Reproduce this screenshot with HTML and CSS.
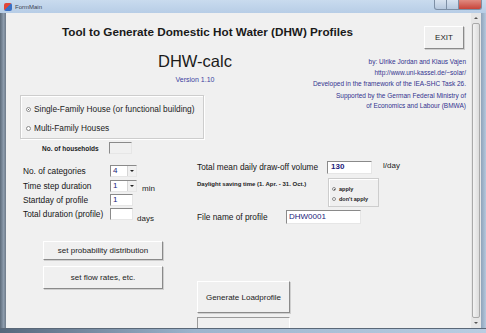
FILE: index.html
```html
<!DOCTYPE html>
<html lang="en">
<head>
    <meta charset="UTF-8">
    <title>FormMain</title>
    <link rel="stylesheet" href="styles.css">
</head>
<body>
<div class="window">
    <div class="titlebar">
        <span class="app-icon"></span>
        <span class="title-text">FormMain</span>
        <div class="caption-btns">
            <span class="cap cap-min"></span>
            <span class="cap cap-max"></span>
            <span class="cap cap-close"></span>
        </div>
    </div>
    <div class="frame">
        <div class="border-left"></div>
        <div class="client">
            <div class="head">
                <h1 class="main-title">Tool to Generate Domestic Hot Water (DHW) Profiles</h1>
                <button class="btn btn-exit">EXIT</button>
            </div>
            <div class="subhead">
                <div class="brand">
                    <div class="brand-name">DHW-calc</div>
                    <div class="version">Version 1.10</div>
                </div>
                <div class="credits">
                    <p>by: Ulrike Jordan and Klaus Vajen</p>
                    <p>http://www.uni-kassel.de/~solar/</p>
                    <p>Developed in the framework of the IEA-SHC Task 26.</p>
                    <p class="gap">Supported by the German Federal Ministry of</p>
                    <p>of Economics and Labour (BMWA)</p>
                </div>
            </div>

            <div class="groupbox">
                <label class="radio-row"><span class="radio checked"></span>Single-Family House (or functional building)</label>
                <label class="radio-row"><span class="radio"></span>Multi-Family Houses</label>
            </div>
            <div class="households">
                <span class="small-bold">No. of households</span>
                <span class="textbox tb-house"></span>
            </div>

            <div class="form-grid">
                <div class="col-left">
                    <div class="row">
                        <span class="lbl">No. of categories</span>
                        <span class="combo"><span class="combo-val">4</span><span class="combo-arrow"></span></span>
                    </div>
                    <div class="row">
                        <span class="lbl">Time step duration</span>
                        <span class="combo"><span class="combo-val">1</span><span class="combo-arrow"></span></span>
                        <span class="unit unit-min">min</span>
                    </div>
                    <div class="row">
                        <span class="lbl">Startday of profile</span>
                        <span class="textbox tb-short">1</span>
                    </div>
                    <div class="row">
                        <span class="lbl">Total duration (profile)</span>
                        <span class="textbox tb-short"></span>
                        <span class="unit unit-days">days</span>
                    </div>
                    <button class="btn btn-wide btn-prob">set probability distribution</button>
                    <button class="btn btn-wide btn-flow">set flow rates, etc.</button>
                </div>
                <div class="col-right">
                    <div class="row">
                        <span class="lbl lbl-volume">Total mean daily draw-off volume</span>
                        <span class="textbox tb-volume">130</span>
                        <span class="unit unit-day">l/day</span>
                    </div>
                    <div class="row row-dst">
                        <span class="small-bold lbl-dst">Daylight saving time (1. Apr. - 31. Oct.)</span>
                        <div class="dst-box">
                            <label class="mini-radio"><span class="radio sm checked"></span>apply</label>
                            <label class="mini-radio"><span class="radio sm"></span>don't apply</label>
                        </div>
                    </div>
                    <div class="row">
                        <span class="lbl lbl-file">File name of profile</span>
                        <span class="textbox tb-file">DHW0001</span>
                    </div>
                    <button class="btn btn-generate">Generate Loadprofile</button>
                    <div class="progress"></div>
                </div>
            </div>
        </div>
        <div class="scrollbar">
            <span class="sb-arrow sb-up"></span>
            <span class="sb-thumb"></span>
            <span class="sb-arrow sb-down"></span>
        </div>
        <div class="border-right"></div>
    </div>
    <div class="border-bottom"></div>
</div>
</body>
</html>
```

FILE: styles.css
```css
*{
    margin: 0;
    padding: 0;
    box-sizing: border-box;
}
body{
    width: 486px;
    height: 333px;
    overflow: hidden;
    background: #ffffff;
    font-family: "Liberation Sans", Arial, sans-serif;
    color: #1c1c1c;
}
.window{
    width: 486px;
    height: 333px;
    display: flex;
    flex-direction: column;
}

/* title bar */
.titlebar{
    height: 13px;
    display: flex;
    align-items: center;
    padding-left: 4px;
    background: linear-gradient(to bottom, #c9dbee, #b7cde6);
}
.app-icon{
    width: 8px;
    height: 8px;
    border-radius: 2px;
    background: linear-gradient(135deg, #e0463a 0 45%, #3a6fc4 45% 100%);
}
.title-text{
    margin-left: 3px;
    font-size: 6px;
    color: #3a4250;
}
.caption-btns{
    margin-left: auto;
    margin-right: 4px;
    display: flex;
    align-self: flex-start;
}
.cap{
    height: 10px;
    border: 1px solid #7d8fa5;
    border-top: none;
    background: linear-gradient(to bottom, #d8e3f0, #b6c8de);
}
.cap-min{
    width: 13px;
    border-radius: 0 0 0 3px;
}
.cap-max{
    width: 12px;
    border-left: none;
}
.cap-close{
    width: 23px;
    border-left: none;
    border-radius: 0 0 3px 0;
    background: linear-gradient(to bottom, #e08a80, #c7443a);
}

/* frame */
.frame{
    flex: 1;
    display: flex;
    min-height: 0;
}
.border-left{
    width: 6px;
    background: linear-gradient(to right, #5d6b7a, #8d9cad 60%, #6e7a88);
}
.border-right{
    width: 5px;
    background: linear-gradient(to right, #8fa3ba, #b5c8dd);
}
.border-bottom{
    height: 5px;
    background: linear-gradient(to right, #55677c, #9db4cd 40%, #b9cde2);
    border-top: 1px solid #5a6878;
}
.scrollbar{
    width: 10px;
    background: #e6e6e6;
    display: flex;
    flex-direction: column;
    align-items: center;
    padding: 2px 0;
}
.sb-arrow{
    width: 0;
    height: 0;
    border-left: 2px solid transparent;
    border-right: 2px solid transparent;
    margin: 2px 0;
}
.sb-up{
    border-bottom: 2px solid #555;
}
.sb-down{
    border-top: 2px solid #555;
}
.sb-thumb{
    flex: 1;
    width: 8px;
    margin: 2px 0;
    border: 1px solid #a9a9a9;
    border-radius: 2px;
    background: linear-gradient(to right, #f3f3f3, #dcdcdc);
}

/* client */
.client{
    flex: 1;
    background: #f0f0f0;
    overflow: hidden;
    padding-top: 12px;
}
.head{
    display: flex;
    align-items: flex-start;
    padding-left: 56px;
    padding-right: 7px;
}
.main-title{
    font-size: 11.7px;
    line-height: 14px;
    font-weight: bold;
    color: #1a1a1a;
}
.btn{
    font-family: "Liberation Sans", Arial, sans-serif;
    font-size: 8px;
    color: #1c1c1c;
    background: #f0f0f0;
    border: 1px solid;
    border-color: #ffffff #8a8a8a #8a8a8a #ffffff;
    box-shadow: 1px 1px 0 #cfcfcf;
}
.btn-exit{
    margin-left: auto;
    margin-top: 1px;
    width: 40px;
    height: 23px;
    font-size: 8px;
}

.subhead{
    display: flex;
    height: 46px;
    padding-right: 5px;
}
.brand{
    flex: 0 0 256px;
    text-align: center;
    padding-left: 122px;
    margin-top: 3px;
}
.brand-name{
    font-size: 16.5px;
    line-height: 18px;
    color: #1a1a1a;
}
.version{
    font-size: 7px;
    line-height: 9px;
    margin-top: 5px;
    color: #3a3ea0;
}
.credits{
    margin-left: auto;
    text-align: right;
    color: #33338f;
    font-size: 6.5px;
    line-height: 11px;
    margin-top: 7px;
    white-space: nowrap;
}
.credits .gap{
    margin-top: 2px;
    line-height: 9px;
}

/* family group */
.groupbox{
    margin-left: 14px;
    width: 184px;
    height: 44px;
    border: 1px solid #cdcdcd;
    box-shadow: inset 1px 1px 0 #fff, 1px 1px 0 #fff;
    padding: 8px 0 0 5px;
    display: flex;
    flex-direction: column;
    gap: 8px;
}
.radio-row{
    display: flex;
    align-items: center;
    font-size: 8.3px;
    line-height: 11px;
}
.radio{
    width: 5px;
    height: 5px;
    border-radius: 50%;
    border: 1px solid #8c8c8c;
    background: #fff;
    margin-right: 3px;
    display: inline-flex;
    align-items: center;
    justify-content: center;
}
.radio.checked::after{
    content: "";
    width: 1px;
    height: 1px;
    border-radius: 50%;
    background: #333;
}
.households{
    display: flex;
    align-items: center;
    margin-top: 3px;
    padding-left: 36px;
}
.small-bold{
    font-size: 6.5px;
    font-weight: bold;
    color: #222;
}
.textbox{
    display: inline-block;
    background: #fff;
    border: 1px solid;
    border-color: #8a8a8a #e6e6e6 #e6e6e6 #8a8a8a;
    font-size: 8px;
    line-height: 10px;
    color: #1b1b7a;
    padding-left: 2px;
}
.tb-house{
    margin-left: 10px;
    width: 23px;
    height: 12px;
    background: #f0f0f0;
}

/* form */
.form-grid{
    display: grid;
    grid-template-columns: 174px 1fr;
    padding-left: 17px;
    margin-top: 6px;
}
.col-left, .col-right{
    display: flex;
    flex-direction: column;
    align-items: flex-start;
}
.row{
    display: flex;
    align-items: center;
    font-size: 8px;
}
.lbl{
    width: 87px;
    font-size: 8.3px;
    line-height: 10px;
    color: #151515;
}
.col-left .row{
    height: 14px;
}
.col-left .row:first-child{
    margin-top: 4px;
    margin-bottom: 1px;
}
.combo{
    width: 27px;
    height: 12px;
    background: #fff;
    border: 1px solid;
    border-color: #8a8a8a #e6e6e6 #e6e6e6 #8a8a8a;
    display: flex;
    font-size: 8px;
    color: #1b1b7a;
}
.combo-val{
    flex: 1;
    padding-left: 2px;
    line-height: 10px;
}
.combo-arrow{
    width: 9px;
    background: #f0f0f0;
    border-left: 1px solid #d6d6d6;
    display: flex;
    align-items: center;
    justify-content: center;
}
.combo-arrow::after{
    content: "";
    border-left: 2px solid transparent;
    border-right: 2px solid transparent;
    border-top: 2px solid #222;
}
.unit{
    font-size: 8px;
}
.unit-min{
    margin-left: 5px;
    margin-top: 4px;
}
.tb-short{
    width: 23px;
    height: 12px;
}
.unit-days{
    margin-left: 4px;
    margin-top: 8px;
}
.btn-wide{
    width: 120px;
    margin-left: 20px;
}
.btn-prob{
    height: 19px;
    margin-top: 20px;
}
.btn-flow{
    height: 23px;
    margin-top: 6px;
}
.lbl-volume{
    width: 130px;
}
.col-right .row:first-child{
    height: 14px;
}
.tb-volume{
    width: 45px;
    height: 13px;
    font-weight: bold;
    padding-left: 3px;
}
.unit-day{
    margin-left: 11px;
    margin-top: -3px;
}
.row-dst{
    margin-top: 4px;
    align-items: flex-start;
}
.lbl-dst{
    width: 131px;
    margin-top: 3px;
    font-size: 6px;
}
.dst-box{
    width: 51px;
    height: 29px;
    border: 1px solid #cdcdcd;
    box-shadow: inset 1px 1px 0 #fff;
    padding: 6px 0 0 3px;
    display: flex;
    flex-direction: column;
    gap: 2px;
}
.mini-radio{
    display: flex;
    align-items: center;
    font-size: 5.5px;
    font-weight: bold;
    line-height: 8px;
}
.radio.sm{
    width: 4px;
    height: 4px;
    margin-right: 3px;
}
.lbl-file{
    width: 89px;
}
.col-right .row:nth-child(3){
    margin-top: 3px;
}
.tb-file{
    width: 75px;
    height: 14px;
    line-height: 12px;
}
.btn-generate{
    width: 93px;
    height: 32px;
    margin-top: 57px;
    font-size: 8px;
}
.progress{
    width: 93px;
    height: 16px;
    margin-top: 4px;
    border: 1px solid #9a9a9a;
    border-right-color: #fff;
    border-bottom: none;
}
```
